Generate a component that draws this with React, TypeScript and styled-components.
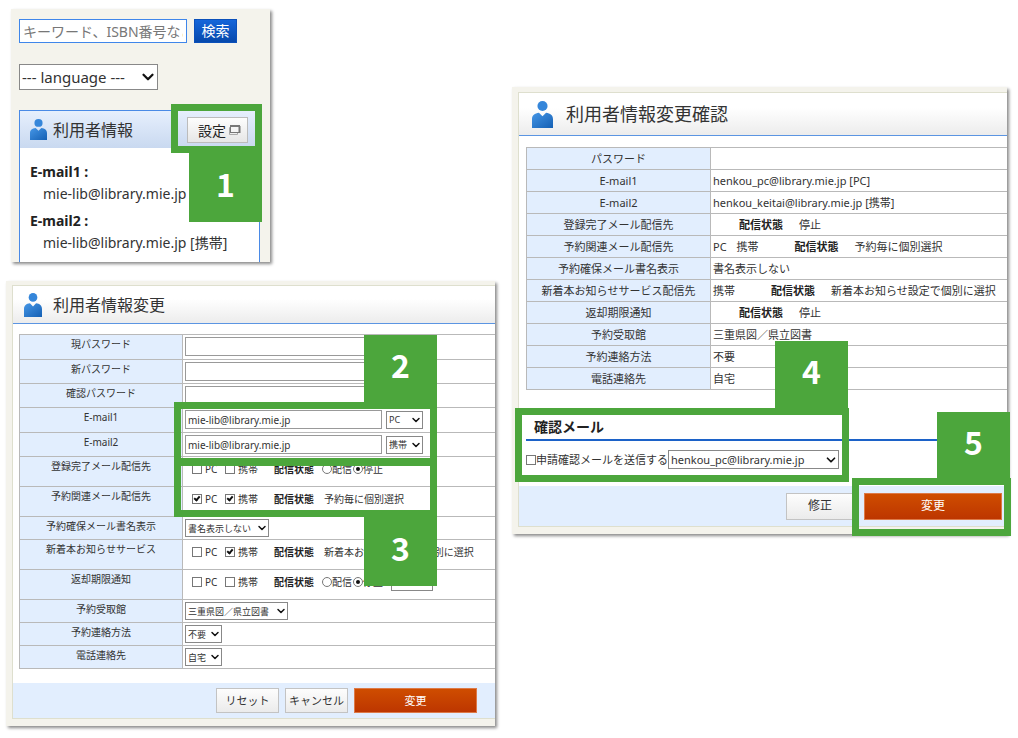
import React from "react";
import styled, { createGlobalStyle, css } from "styled-components";
import { ChevronDown } from "lucide-react";

const GREEN = "#4ca63c";
const CREAM = "#f4f3ec";
const PALE_BLUE = "#e2eefe";
const LINE = "#b9b9b9";

const GlobalStyle = createGlobalStyle`
  *, *::before, *::after { box-sizing: border-box; }
  body {
    margin: 0;
    background: #fff;
    color: #333;
    font-family: "Noto Sans", "Noto Sans CJK JP", sans-serif;
    font-size: 10px;
  }
  input, select, button { margin: 0; font-family: inherit; color: inherit; border-radius: 0; }
  h2, h3, dl, dd { margin: 0; }
`;

const Page = styled.main`
  display: grid;
  grid-template-columns: 489fr 495fr;
  column-gap: 17px;
  align-items: start;
  padding: 9px 11px 11px 6px;
`;

const LeftColumn = styled.div`
  display: flex;
  flex-direction: column;
  gap: 19px;
`;

const RightColumn = styled.div`
  padding-top: 78px;
`;

const Shot = styled.section<{ $narrow?: boolean }>`
  position: relative;
  background: ${CREAM};
  box-shadow: 2px 2px 3px #8a8a8a;
  ${(p) => p.$narrow && css`
    width: 100%;
    max-width: 259px;
    margin-left: 5px;
    padding: 10px 10px 0 8px;
  `}
`;

const Sheet = styled.div<{ $top: number }>`
  padding: ${(p) => p.$top}px 0 7px 6px;
`;

const SheetBody = styled.div`
  background: #fff;
  border: 1px solid #dedfce;
  border-right: 0;
`;

const SheetHeader = styled.header<{ $large?: boolean }>`
  display: flex;
  align-items: center;
  gap: ${(p) => (p.$large ? 13 : 11)}px;
  height: ${(p) => (p.$large ? 43 : 38)}px;
  padding-left: ${(p) => (p.$large ? 13 : 11)}px;
  background: linear-gradient(#fff 35%, #ececec);
  border-bottom: 1px solid #5b95e2;
`;

const SheetTitle = styled.h2<{ $size: number }>`
  font-size: ${(p) => p.$size}px;
  line-height: 24px;
  font-weight: 400;
`;

const Footer = styled.footer<{ $large?: boolean }>`
  display: flex;
  justify-content: flex-end;
  align-items: center;
  gap: ${(p) => (p.$large ? 10 : 6)}px;
  height: ${(p) => (p.$large ? 40 : 35)}px;
  padding-right: ${(p) => (p.$large ? 5 : 18)}px;
  background: ${PALE_BLUE};
`;

const Button = styled.button<{ $large?: boolean; $primary?: boolean }>`
  height: ${(p) => (p.$large ? 27 : 25)}px;
  width: ${(p) => (p.$primary ? (p.$large ? 138 : 123) : p.$large ? 68 : 63)}px;
  padding: 0;
  font-size: ${(p) => (p.$large ? 12 : 11)}px;
  line-height: 16px;
  border: 1px solid #c3c3c3;
  background: linear-gradient(#fdfdfd, #ebebeb);
  ${(p) => p.$primary && css`
    color: #fff;
    border-color: #dd7a48;
    background: linear-gradient(#cf4d00, #bd3600);
  `}
`;

const Field = styled.input`
  display: block;
  width: 197px;
  height: 19px;
  padding: 0 2px;
  border: 1px solid #999;
  background: #fff;
  font-size: 10px;
`;

const SelectWrap = styled.span<{ $w: number; $h: number; $icon: number }>`
  position: relative;
  display: inline-block;
  vertical-align: top;
  width: ${(p) => p.$w}px;
  height: ${(p) => p.$h}px;
  svg {
    position: absolute;
    right: 1px;
    top: 50%;
    margin-top: -${(p) => p.$icon / 2}px;
    color: #111;
    pointer-events: none;
  }
`;

const SelectBox = styled.select<{ $size: number }>`
  appearance: none;
  display: block;
  width: 100%;
  height: 100%;
  padding: 0 0 0 2px;
  border: 1px solid #888;
  background: #fff;
  font-size: ${(p) => p.$size}px;
`;

function Select({ value, label, w, h = 18, size = 9 }: { value: string; label: string; w: number; h?: number; size?: number }) {
  const icon = size > 12 ? 18 : size > 10 ? 14 : 12;
  return (
    <SelectWrap $w={w} $h={h} $icon={icon}>
      <SelectBox $size={size} aria-label={label} defaultValue={value}>
        <option>{value}</option>
      </SelectBox>
      <ChevronDown size={icon} strokeWidth={3} />
    </SelectWrap>
  );
}

const Tick = styled.input`
  appearance: none;
  flex: none;
  position: relative;
  width: 10px;
  height: 10px;
  border: 1px solid #777;
  background: #fff;
  &[type="radio"] { border-radius: 50%; }
  &[type="checkbox"]:checked::after {
    content: "";
    position: absolute;
    left: 2px;
    top: 0;
    width: 4px;
    height: 6px;
    border: solid #111;
    border-width: 0 2px 2px 0;
    transform: rotate(40deg);
  }
  &[type="radio"]:checked::after {
    content: "";
    position: absolute;
    inset: 2px;
    border-radius: 50%;
    background: #111;
  }
`;

const Option = styled.label<{ $w: number; $gap?: number }>`
  display: flex;
  align-items: center;
  flex: none;
  gap: ${(p) => p.$gap ?? 3}px;
  width: ${(p) => p.$w}px;
  white-space: nowrap;
`;

const FormTable = styled.table`
  width: calc(100% - 6px);
  margin: 10px 0 14px 6px;
  border-collapse: collapse;
  font-size: 10px;
  line-height: 16px;
  th, td {
    padding: 0;
    vertical-align: top;
    border: 1px solid ${LINE};
    border-right: 0;
  }
  th {
    width: 163px;
    padding-top: 1px;
    font-weight: 400;
    background: ${PALE_BLUE};
  }
  td { padding: 2px 0 0 2px; }
`;

const FormRow = styled.tr<{ $h: number }>`
  height: ${(p) => p.$h}px;
`;

const Line = styled.div<{ $gap?: number }>`
  display: flex;
  align-items: center;
  gap: ${(p) => p.$gap ?? 0}px;
`;

const StatusLine = styled.div`
  display: flex;
  align-items: center;
  height: 19px;
  padding-left: 7px;
  white-space: nowrap;
`;

const StateLabel = styled.b<{ $w: number }>`
  flex: none;
  width: ${(p) => p.$w}px;
  color: #222;
`;

const StateNote = styled.span`
  padding-left: 2px;
`;

const ReviewTable = styled.table`
  width: calc(100% - 7px);
  margin: 11px 0 0 7px;
  border-collapse: collapse;
  font-size: 11px;
  line-height: 21px;
  th, td {
    padding: 0;
    border: 1px solid ${LINE};
    border-right: 0;
    white-space: nowrap;
  }
  th {
    width: 184px;
    font-weight: 400;
    background: ${PALE_BLUE};
  }
  td { padding-left: 2px; text-align: left; }
`;

const Channels = styled.span<{ $empty: boolean }>`
  display: flex;
  gap: 10px;
  margin-right: ${(p) => (p.$empty ? 26 : 36)}px;
`;

const MailSection = styled.section`
  margin: 26px 0 17px 7px;
`;

const MailTitle = styled.h3`
  padding: 0 0 1px 8px;
  font-size: 14px;
  line-height: 22px;
  color: #222;
  border-bottom: 2px solid #1c62c8;
`;

const MailLine = styled.div`
  display: flex;
  align-items: center;
  margin-top: 9px;
  font-size: 11px;
  line-height: 19px;
`;

const MailLabel = styled.label`
  display: flex;
  align-items: center;
  white-space: nowrap;
`;

const SearchRow = styled.form`
  display: flex;
  gap: 7px;
  margin-bottom: 21px;
`;

const SearchField = styled.input`
  width: 168px;
  height: 24px;
  padding: 0 3px;
  border: 1px solid #3f86ea;
  background: #fff;
  font-size: 14px;
  &::placeholder { color: #777; opacity: 1; }
`;

const SearchButton = styled.button`
  width: 43px;
  height: 24px;
  padding: 0;
  border: 1px solid #0b50ba;
  background: linear-gradient(#1566da, #0648ac);
  color: #fff;
  font-size: 14px;
  line-height: 20px;
`;

const Card = styled.div`
  margin-top: 20px;
  border: 1px solid #4a8ae6;
  border-bottom: 0;
  background: #fff;
`;

const CardHeader = styled.header`
  display: flex;
  align-items: center;
  gap: 6px;
  height: 37px;
  padding: 0 11px 0 10px;
  background: linear-gradient(#e6effd, #c9d9f0);
`;

const CardTitle = styled.h2`
  flex: 1;
  font-size: 16px;
  line-height: 24px;
  font-weight: 400;
`;

const SettingButton = styled.button`
  display: flex;
  align-items: center;
  justify-content: center;
  gap: 2px;
  width: 61px;
  height: 26px;
  padding: 0 0 0 4px;
  border: 1px solid #bcbcbc;
  background: linear-gradient(#fdfdfd, #e6e6e6);
  font-size: 14px;
  color: #222;
`;

const MailList = styled.dl`
  padding: 13px 0 8px 10px;
  font-size: 14px;
  line-height: 22px;
  dt { font-weight: 700; color: #222; }
  dd { padding-left: 13px; white-space: nowrap; }
  dd + dt { margin-top: 5px; }
`;

type Box = { $top: number; $left?: number; $right?: number; $w: number; $h: number };
const place = css<Box>`
  position: absolute;
  top: ${(p) => p.$top}px;
  ${(p) => (p.$right !== undefined ? `right: ${p.$right}px;` : `left: ${p.$left}px;`)}
  width: ${(p) => p.$w}px;
  height: ${(p) => p.$h}px;
`;

const Highlight = styled.div<Box>`
  ${place}
  border: 7px solid ${GREEN};
  pointer-events: none;
`;

const Step = styled.div<Box>`
  ${place}
  display: flex;
  align-items: center;
  justify-content: center;
  padding-bottom: 9px;
  background: ${GREEN};
  color: #fff;
  font-family: "Noto Sans CJK JP", sans-serif;
  font-size: 32px;
  line-height: 40px;
  font-weight: 700;
`;

function Person({ width, height }: { width: number; height: number }) {
  const id = `person-${width}`;
  return (
    <svg width={width} height={height} viewBox="0 0 20 26" preserveAspectRatio="none" aria-hidden="true">
      <defs>
        <linearGradient id={id} x1="0" y1="0" x2="1" y2="1">
          <stop offset="0" stopColor="#4596e6" />
          <stop offset="1" stopColor="#1560b4" />
        </linearGradient>
      </defs>
      <circle cx="10" cy="4.8" r="4.8" fill="#3586da" />
      <path d="M0 26V17.5C0 13.6 2.6 11.6 6.6 11.2L10 14.6L13.4 11.2C17.4 11.6 20 13.6 20 17.5V26Z" fill={`url(#${id})`} />
    </svg>
  );
}

function WindowIcon() {
  return (
    <svg width="13" height="12" viewBox="0 0 13 12" fill="none" aria-hidden="true">
      <path d="M3 3.5H1.5V10.5H9.5V9" stroke="#aaa" />
      <rect x="2.5" y="1.5" width="9" height="7" fill="#f4f4f4" stroke="#777" />
      <path d="M2 2H12" stroke="#777" strokeWidth="2" />
      <path d="M11.5 2V9" stroke="#777" strokeWidth="2" />
    </svg>
  );
}

function ChannelOptions({ row, pc, mobile }: { row: string; pc?: boolean; mobile?: boolean }) {
  return (
    <>
      <Option $w={33}><Tick type="checkbox" name={`${row}-pc`} defaultChecked={pc} />PC</Option>
      <Option $w={49}><Tick type="checkbox" name={`${row}-mobile`} defaultChecked={mobile} />携帯</Option>
      <StateLabel $w={48}>配信状態</StateLabel>
    </>
  );
}

function DeliveryRadios({ name }: { name: string }) {
  return (
    <>
      <Option $w={31} $gap={0}><Tick type="radio" name={name} />配信</Option>
      <Option $w={38} $gap={0}><Tick type="radio" name={name} defaultChecked />停止</Option>
    </>
  );
}

const formRows: { label: string; h: number; content: React.ReactNode }[] = [
  { label: "現パスワード", h: 25, content: <Field type="password" aria-label="現パスワード" /> },
  { label: "新パスワード", h: 24, content: <Field type="password" aria-label="新パスワード" /> },
  { label: "確認パスワード", h: 24, content: <Field type="password" aria-label="確認パスワード" /> },
  { label: "E-mail1", h: 25, content: <Line $gap={4}><Field aria-label="E-mail1" defaultValue="mie-lib@library.mie.jp" /><Select label="E-mail1 種別" value="PC" w={37} /></Line> },
  { label: "E-mail2", h: 24, content: <Line $gap={4}><Field aria-label="E-mail2" defaultValue="mie-lib@library.mie.jp" /><Select label="E-mail2 種別" value="携帯" w={37} /></Line> },
  { label: "登録完了メール配信先", h: 30, content: <StatusLine><ChannelOptions row="done" /><DeliveryRadios name="done" /></StatusLine> },
  { label: "予約関連メール配信先", h: 30, content: <StatusLine><ChannelOptions row="reserve" pc mobile /><StateNote>予約毎に個別選択</StateNote></StatusLine> },
  { label: "予約確保メール書名表示", h: 23, content: <Select label="予約確保メール書名表示" value="書名表示しない" w={84} /> },
  { label: "新着本お知らせサービス", h: 30, content: <StatusLine><ChannelOptions row="new" mobile /><StateNote>新着本お知らせ設定で個別に選択</StateNote></StatusLine> },
  { label: "返却期限通知", h: 30, content: <StatusLine><ChannelOptions row="due" /><DeliveryRadios name="due" /><Select label="通知日" value="3日前" w={42} /></StatusLine> },
  { label: "予約受取館", h: 23, content: <Select label="予約受取館" value="三重県図／県立図書" w={103} /> },
  { label: "予約連絡方法", h: 23, content: <Select label="予約連絡方法" value="不要" w={37} /> },
  { label: "電話連絡先", h: 23, content: <Select label="電話連絡先" value="自宅" w={37} /> },
];

type Review = { label: string; value?: string; channels?: string[] };
const reviewRows: Review[] = [
  { label: "パスワード", value: "" },
  { label: "E-mail1", value: "henkou_pc@library.mie.jp [PC]" },
  { label: "E-mail2", value: "henkou_keitai@library.mie.jp [携帯]" },
  { label: "登録完了メール配信先", channels: [], value: "停止" },
  { label: "予約関連メール配信先", channels: ["PC", "携帯"], value: "予約毎に個別選択" },
  { label: "予約確保メール書名表示", value: "書名表示しない" },
  { label: "新着本お知らせサービス配信先", channels: ["携帯"], value: "新着本お知らせ設定で個別に選択" },
  { label: "返却期限通知", channels: [], value: "停止" },
  { label: "予約受取館", value: "三重県図／県立図書" },
  { label: "予約連絡方法", value: "不要" },
  { label: "電話連絡先", value: "自宅" },
];

function UserInfoPanel() {
  return (
    <Shot $narrow>
      <SearchRow onSubmit={(e) => e.preventDefault()}>
        <SearchField aria-label="検索キーワード" placeholder="キーワード、ISBN番号など" />
        <SearchButton>検索</SearchButton>
      </SearchRow>
      <Select label="language" value="--- language ---" w={139} h={26} size={15} />
      <Card>
        <CardHeader>
          <Person width={17} height={21} />
          <CardTitle>利用者情報</CardTitle>
          <SettingButton type="button">設定<WindowIcon /></SettingButton>
        </CardHeader>
        <MailList>
          <dt>E-mail1 :</dt>
          <dd>mie-lib@library.mie.jp</dd>
          <dt>E-mail2 :</dt>
          <dd>mie-lib@library.mie.jp [携帯]</dd>
        </MailList>
      </Card>
      <Highlight $top={95} $right={8} $w={91} $h={49} />
      <Step $top={143} $right={8} $w={73} $h={70}>1</Step>
    </Shot>
  );
}

function EditPanel() {
  return (
    <Shot>
      <Sheet $top={4}>
        <SheetBody>
          <SheetHeader>
            <Person width={18} height={24} />
            <SheetTitle $size={16}>利用者情報変更</SheetTitle>
          </SheetHeader>
          <FormTable>
            <tbody>
              {formRows.map((r) => (
                <FormRow key={r.label} $h={r.h}>
                  <th scope="row">{r.label}</th>
                  <td>{r.content}</td>
                </FormRow>
              ))}
            </tbody>
          </FormTable>
          <Footer>
            <Button type="button">リセット</Button>
            <Button type="button">キャンセル</Button>
            <Button type="button" $primary>変更</Button>
          </Footer>
        </SheetBody>
      </Sheet>
      <Highlight $top={121} $left={168} $w={263} $h={63} />
      <Highlight $top={178} $left={168} $w={263} $h={58} />
      <Step $top={54} $left={358} $w={73} $h={67}>2</Step>
      <Step $top={235} $left={358} $w={73} $h={70}>3</Step>
    </Shot>
  );
}

function ConfirmPanel() {
  return (
    <Shot>
      <Sheet $top={5}>
        <SheetBody>
          <SheetHeader $large>
            <Person width={21} height={27} />
            <SheetTitle $size={18}>利用者情報変更確認</SheetTitle>
          </SheetHeader>
          <ReviewTable>
            <tbody>
              {reviewRows.map((r) => (
                <tr key={r.label}>
                  <th scope="row">{r.label}</th>
                  <td>
                    {r.channels ? (
                      <Line>
                        <Channels $empty={r.channels.length === 0}>
                          {r.channels.map((c) => <span key={c}>{c}</span>)}
                        </Channels>
                        <StateLabel $w={60}>配信状態</StateLabel>
                        {r.value}
                      </Line>
                    ) : r.value}
                  </td>
                </tr>
              ))}
            </tbody>
          </ReviewTable>
          <MailSection>
            <MailTitle>確認メール</MailTitle>
            <MailLine>
              <MailLabel><Tick type="checkbox" />申請確認メールを送信する</MailLabel>
              <Select label="送信先" value="henkou_pc@library.mie.jp" w={171} h={19} size={11} />
            </MailLine>
          </MailSection>
          <Footer $large>
            <Button type="button" $large>修正</Button>
            <Button type="button" $large $primary>変更</Button>
          </Footer>
        </SheetBody>
      </Sheet>
      <Highlight $top={321} $left={3} $w={334} $h={74} />
      <Step $top={254} $left={263} $w={73} $h={67}>4</Step>
      <Step $top={325} $right={-3} $w={73} $h={67}>5</Step>
      <Highlight $top={391} $right={-4} $w={159} $h={58} />
    </Shot>
  );
}

export default function App() {
  return (
    <>
      <GlobalStyle />
      <Page>
        <LeftColumn>
          <UserInfoPanel />
          <EditPanel />
        </LeftColumn>
        <RightColumn>
          <ConfirmPanel />
        </RightColumn>
      </Page>
    </>
  );
}
